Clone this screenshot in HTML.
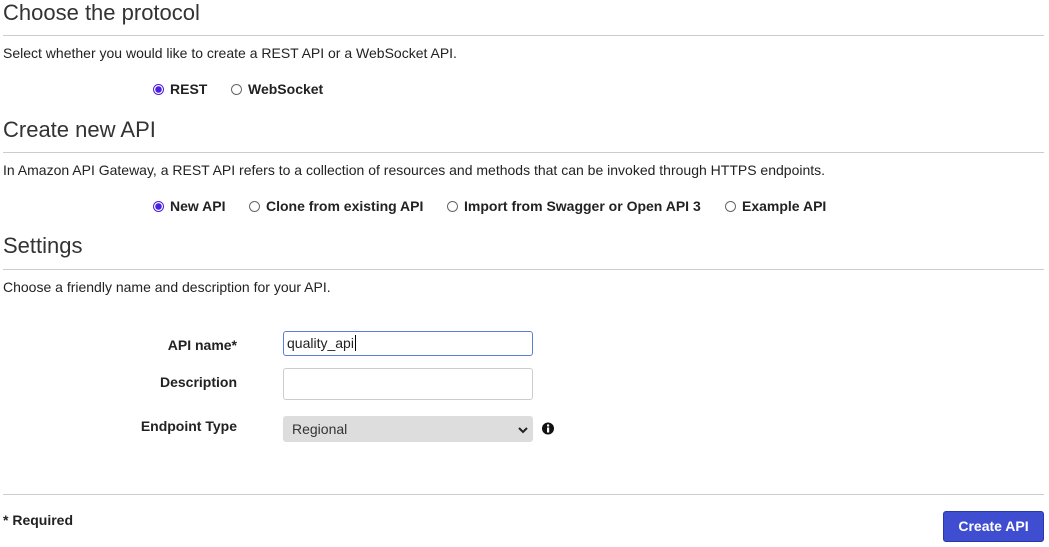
<!DOCTYPE html>
<html><head><style>
body{margin:0;width:1049px;height:547px;background:#fff;font-family:"Liberation Sans",sans-serif;color:#16191f;position:relative;overflow:hidden}
.a{position:absolute;white-space:nowrap}
h2{position:absolute;margin:0;font-weight:normal;font-size:22px;color:#333;left:3px;line-height:26px}
.hr{position:absolute;left:3px;width:1041px;height:1px;background:#ccc}
.p{font-size:14px;left:3px;color:#222}
.r{font-size:14px;font-weight:bold;color:#222;display:flex;align-items:center}
.c{width:11px;height:11px;border:1px solid #666;border-radius:50%;margin-right:6px;box-sizing:border-box;display:inline-block}
.c.on{border:1px solid #4a1fe0;background:radial-gradient(circle,#4a1fe0 3px,#fff 3.5px)}
.l{font-size:14px;font-weight:bold;color:#222;text-align:right;width:200px}
.in{position:absolute;left:283px;width:250px;box-sizing:border-box;border:1px solid #ccc;border-radius:3px}
</style></head><body>
<h2 style="top:0">Choose the protocol</h2>
<div class="hr" style="top:35px"></div>
<div class="a p" style="top:45px">Select whether you would like to create a REST API or a WebSocket API.</div>
<div class="a r" style="left:153px;top:81px"><span class="c on"></span>REST</div>
<div class="a r" style="left:231px;top:81px"><span class="c"></span>WebSocket</div>
<h2 style="top:117px">Create new API</h2>
<div class="hr" style="top:152px"></div>
<div class="a p" style="top:162px">In Amazon API Gateway, a REST API refers to a collection of resources and methods that can be invoked through HTTPS endpoints.</div>
<div class="a r" style="left:153px;top:198px"><span class="c on"></span>New API</div>
<div class="a r" style="left:249px;top:198px"><span class="c"></span>Clone from existing API</div>
<div class="a r" style="left:447px;top:198px"><span class="c"></span>Import from Swagger or Open API 3</div>
<div class="a r" style="left:725px;top:198px"><span class="c"></span>Example API</div>
<h2 style="top:233px">Settings</h2>
<div class="hr" style="top:269px"></div>
<div class="a p" style="top:279px">Choose a friendly name and description for your API.</div>
<div class="a l" style="left:37px;top:337px">API name*</div>
<div class="in" style="top:331px;height:25px;border-color:#5a7ee0;font-size:14px;padding:3px 0 0 3px;color:#222">quality_api<span style="border-left:1px solid #000;margin-left:1px"></span></div>
<div class="a l" style="left:37px;top:374px">Description</div>
<div class="in" style="top:368px;height:32px"></div>
<div class="a l" style="left:37px;top:418px">Endpoint Type</div>
<div class="in" style="top:416px;height:26px;background:#ddd;border-color:#ddd;font-size:14px;padding:4px 0 0 8px;color:#333">Regional<svg style="position:absolute;right:4px;top:9px" width="10" height="8" viewBox="0 0 10 8"><path d="M1 2l4 4 4-4" stroke="#222" stroke-width="2" fill="none"/></svg></div>
<svg class="a" style="left:542px;top:422px" width="12" height="13" viewBox="0 0 12 13"><circle cx="6" cy="6.5" r="6" fill="#111"/><rect x="5" y="5.5" width="2.2" height="5" fill="#fff"/><circle cx="6.1" cy="3.5" r="1.2" fill="#fff"/></svg>
<div class="hr" style="top:494px"></div>
<div class="a" style="left:3px;top:512px;font-size:14px;font-weight:bold;color:#222">* Required</div>
<div class="a" style="left:943px;top:511px;width:101px;height:31px;background:#3f4ed0;border:1px solid #2a37a8;box-sizing:border-box;border-radius:3px;color:#fff;font-weight:bold;font-size:14px;text-align:center;line-height:29px">Create API</div>
</body></html>
